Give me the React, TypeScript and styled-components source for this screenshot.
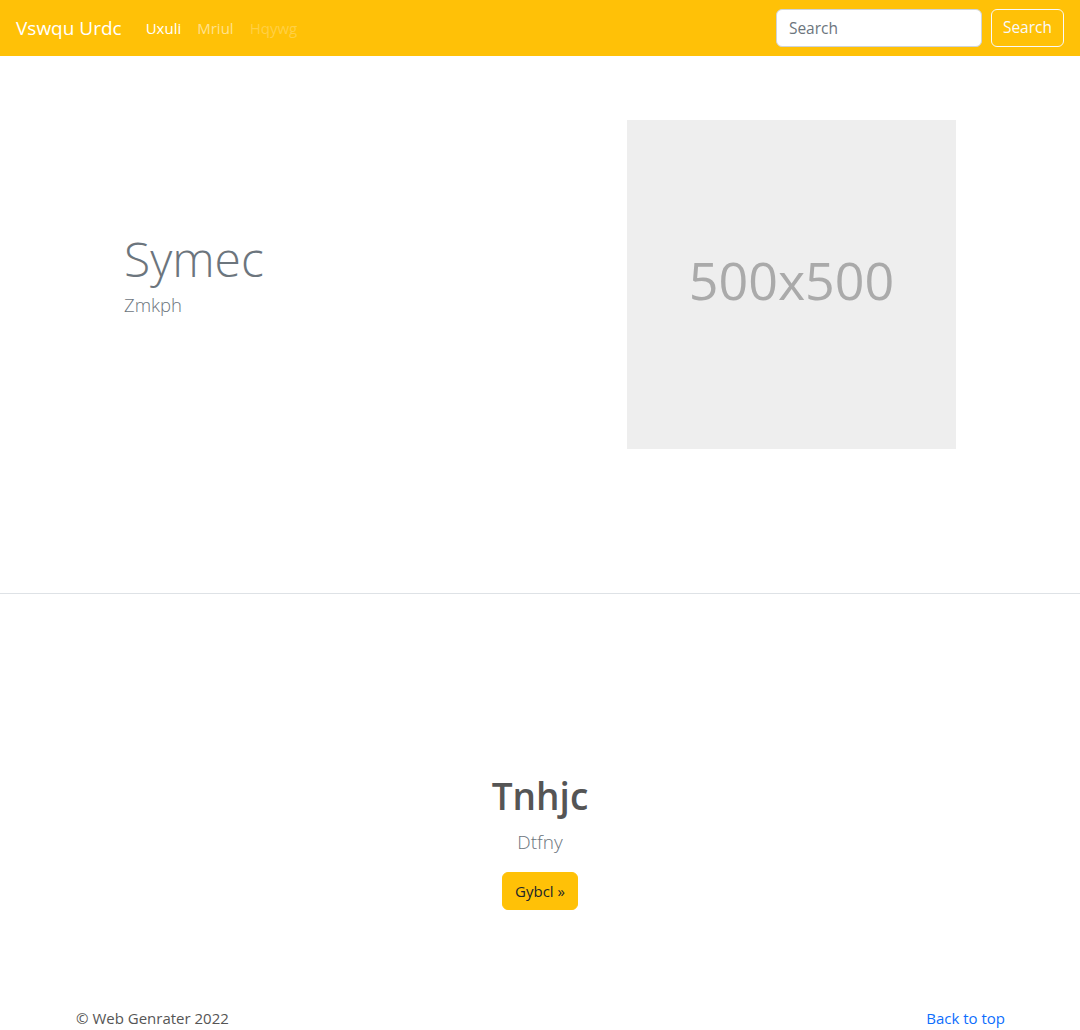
import React from "react";
import styled, { createGlobalStyle } from "styled-components";

const Global = createGlobalStyle`
  html, body { margin: 0; padding: 0; background: #fff; }
  body {
    font-family: "Open Sans", "Noto Sans", sans-serif;
    font-size: 16px;
    line-height: 1.5;
    color: #212529;
  }
  * { box-sizing: border-box; }
`;

const Navbar = styled.nav`
  height: 56px;
  background: #ffc107;
  display: flex;
  align-items: center;
  justify-content: space-between;
  padding: 0 16px;
`;

const NavLeft = styled.div`
  display: flex;
  align-items: center;
`;

const Brand = styled.a`
  color: #fff;
  font-size: 19px;
  margin-right: 16px;
  text-decoration: none;
  line-height: 30px;
`;

const NavLink = styled.a<{ $alpha: number }>`
  color: rgba(255, 255, 255, ${(p) => p.$alpha});
  font-size: 15px;
  font-weight: 500;
  padding: 8px;
  text-decoration: none;
`;

const SearchForm = styled.form`
  display: flex;
  align-items: center;
  gap: 9px;
`;

const SearchInput = styled.input`
  width: 206px;
  height: 38px;
  border: 1px solid #ced4da;
  border-radius: 6px;
  padding: 6px 12px;
  font: inherit;
  font-size: 15.5px;
  color: #212529;
  background: #fff;
  &::placeholder { color: #6c757d; }
`;

const OutlineButton = styled.button`
  height: 38px;
  padding: 6px 11px;
  border: 1px solid #f8f9fa;
  border-radius: 6px;
  background: transparent;
  color: #f8f9fa;
  font: inherit;
  font-size: 15.5px;
`;

const Hero = styled.section`
  height: 538px;
  border-bottom: 1px solid #dee2e6;
  display: grid;
  grid-template-columns: 1fr 1fr;
  padding: 64px 124px 0 124px;
`;

const HeroText = styled.div`
  display: flex;
  flex-direction: column;
  justify-content: center;
  height: 329px;
  padding-bottom: 20px;
`;

const HeroTitle = styled.h1`
  margin: 0;
  font-size: 48px;
  font-weight: 300;
  color: #6c757d;
  line-height: 1.2;
`;

const HeroLead = styled.p`
  margin: 4px 0 0;
  font-size: 18.5px;
  font-weight: 300;
  color: #6c757d;
`;

const Placeholder = styled.div`
  justify-self: end;
  width: 329px;
  height: 329px;
  background: #eeeeee;
  color: #aaaaaa;
  display: flex;
  align-items: center;
  justify-content: center;
  font-size: 52px;
  padding-bottom: 10px;
`;

const Feature = styled.section`
  padding: 180px 0 0;
  display: flex;
  flex-direction: column;
  align-items: center;
  height: 413px;
`;

const FeatureTitle = styled.h2`
  margin: 0;
  font-size: 37px;
  font-weight: 600;
  color: #555;
  line-height: 1.2;
`;

const FeatureLead = styled.p`
  margin: 10px 0 15px;
  font-size: 19px;
  font-weight: 300;
  color: #6c757d;
`;

const WarnButton = styled.button`
  height: 38px;
  padding: 6px 12px;
  border: 1px solid #ffc107;
  border-radius: 6px;
  background: #ffc107;
  color: #212529;
  font: inherit;
  font-size: 15px;
`;

const Footer = styled.footer`
  display: flex;
  justify-content: space-between;
  padding: 0 75px 0 76px;
  font-size: 15px;
`;

const FooterText = styled.span`
  color: #555;
`;

const FooterLink = styled.a`
  color: #0d6efd;
  text-decoration: none;
`;

export default function App() {
  return (
    <>
      <Global />
      <Navbar>
        <NavLeft>
          <Brand href="#">Vswqu Urdc</Brand>
          <NavLink $alpha={1} href="#">Uxuli</NavLink>
          <NavLink $alpha={0.55} href="#">Mriul</NavLink>
          <NavLink $alpha={0.25} href="#">Hqywg</NavLink>
        </NavLeft>
        <SearchForm onSubmit={(e) => e.preventDefault()}>
          <SearchInput placeholder="Search" />
          <OutlineButton type="submit">Search</OutlineButton>
        </SearchForm>
      </Navbar>
      <Hero>
        <HeroText>
          <HeroTitle>Symec</HeroTitle>
          <HeroLead>Zmkph</HeroLead>
        </HeroText>
        <Placeholder>500x500</Placeholder>
      </Hero>
      <Feature>
        <FeatureTitle>Tnhjc</FeatureTitle>
        <FeatureLead>Dtfny</FeatureLead>
        <WarnButton>Gybcl »</WarnButton>
      </Feature>
      <Footer>
        <FooterText>© Web Genrater 2022</FooterText>
        <FooterLink href="#">Back to top</FooterLink>
      </Footer>
    </>
  );
}
